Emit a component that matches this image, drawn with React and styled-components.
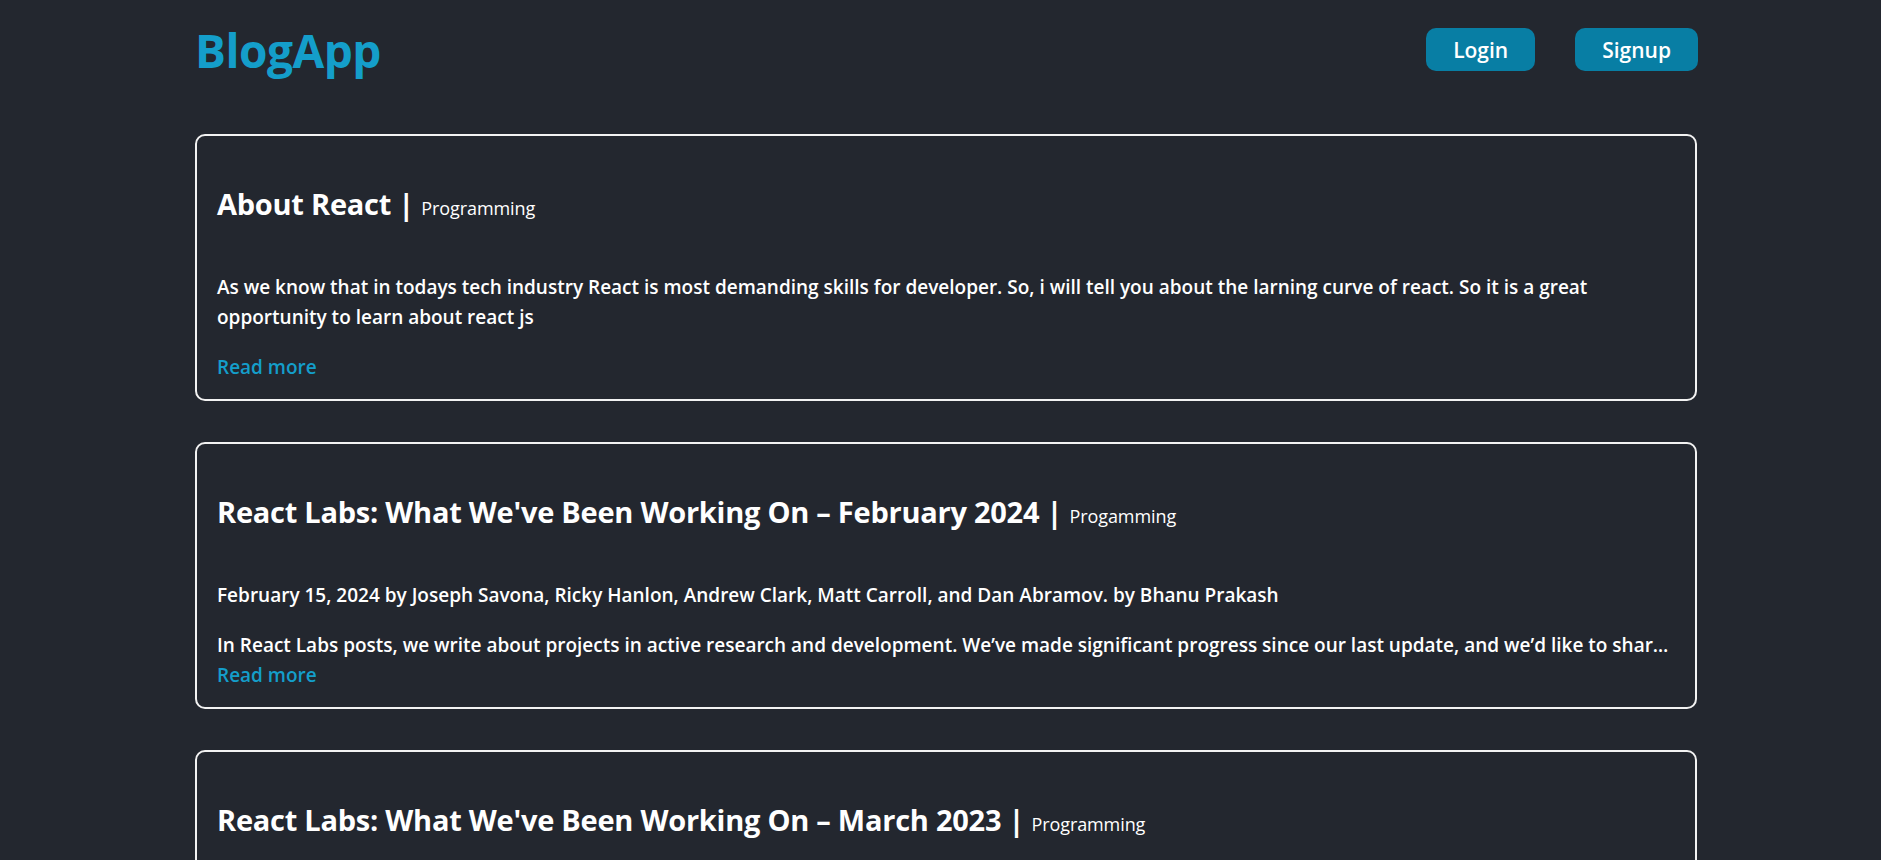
import React from "react";
import styled, { createGlobalStyle } from "styled-components";

const GlobalStyle = createGlobalStyle`
  html, body {
    margin: 0;
    padding: 0;
    background: #23272f;
    color: #ffffff;
    font-family: "Open Sans", "Noto Sans", sans-serif;
  }
  * { box-sizing: border-box; }
`;

const Page = styled.div`
  padding: 0 184px 40px 195px;
`;

const Header = styled.header`
  height: 99px;
  display: flex;
  align-items: center;
  justify-content: space-between;
`;

const Logo = styled.h1`
  margin: 0;
  font-size: 46px;
  font-weight: 700;
  line-height: 1;
  color: #149eca;
  letter-spacing: -0.5px;
`;

const Actions = styled.nav`
  display: flex;
  gap: 40px;
  align-items: center;
  margin-right: -1px;
`;

const NavButton = styled.button`
  height: 43px;
  padding: 0 27px;
  border: none;
  border-radius: 10px;
  background: #087ea4;
  color: #ffffff;
  font-family: inherit;
  font-size: 21px;
  font-weight: 600;
  cursor: pointer;
`;

const PostList = styled.main`
  margin-top: 35px;
  display: flex;
  flex-direction: column;
  gap: 41px;
`;

const Card = styled.article`
  border: 2px solid #f2f2f2;
  border-radius: 10px;
  padding: 16px 20px 17px;
`;

const Title = styled.h2`
  margin: 32px 0 44px;
  font-size: 29px;
  font-weight: 700;
  line-height: 40px;
  letter-spacing: -0.25px;
`;

const Category = styled.span`
  font-size: 18px;
  font-weight: 400;
  letter-spacing: -0.1px;
`;

const Body = styled.div`
  font-size: 19px;
  font-weight: 600;
  line-height: 30px;

  p {
    margin: 20px 0;
  }
`;

const Excerpt = styled.div`
  white-space: nowrap;
  overflow: hidden;
  text-overflow: ellipsis;
`;

const ReadMore = styled.a`
  display: block;
  color: #149eca;
  font-size: 19px;
  font-weight: 600;
  line-height: 30px;
  text-decoration: none;
`;

const posts = [
  {
    title: "About React",
    category: "Programming",
    paragraphs: [
      "As we know that in todays tech industry React is most demanding skills for developer. So, i will tell you about the larning curve of react. So it is a great opportunity to learn about react js",
    ],
  },
  {
    title: "React Labs: What We've Been Working On \u2013 February 2024",
    category: "Progamming",
    paragraphs: [
      "February 15, 2024 by Joseph Savona, Ricky Hanlon, Andrew Clark, Matt Carroll, and Dan Abramov. by Bhanu Prakash",
    ],
    excerpt:
      "In React Labs posts, we write about projects in active research and development. We\u2019ve made significant progress since our last update, and we\u2019d like to share our progress with you.",
  },
  {
    title: "React Labs: What We've Been Working On \u2013 March 2023",
    category: "Programming",
    paragraphs: [
      "March 22, 2023 by Joseph Savona, Josh Story, Lauren Tan, Mengdi Chen, Samuel Susla, Sathya Gunasekaran, Sebastian Markb\u00e5ge, and Andrew Clark",
    ],
    excerpt:
      "In React Labs posts, we write about projects in active research and development.",
  },
];

export default function App() {
  return (
    <>
      <GlobalStyle />
      <Page>
        <Header>
          <Logo>BlogApp</Logo>
          <Actions>
            <NavButton>Login</NavButton>
            <NavButton>Signup</NavButton>
          </Actions>
        </Header>
        <PostList>
          {posts.map((post) => (
            <Card key={post.title}>
              <Title>
                {post.title} | <Category>{post.category}</Category>
              </Title>
              <Body>
                {post.paragraphs.map((t) => (
                  <p key={t}>{t}</p>
                ))}
                {post.excerpt && <Excerpt>{post.excerpt}</Excerpt>}
              </Body>
              <ReadMore href="#">Read more</ReadMore>
            </Card>
          ))}
        </PostList>
      </Page>
    </>
  );
}
